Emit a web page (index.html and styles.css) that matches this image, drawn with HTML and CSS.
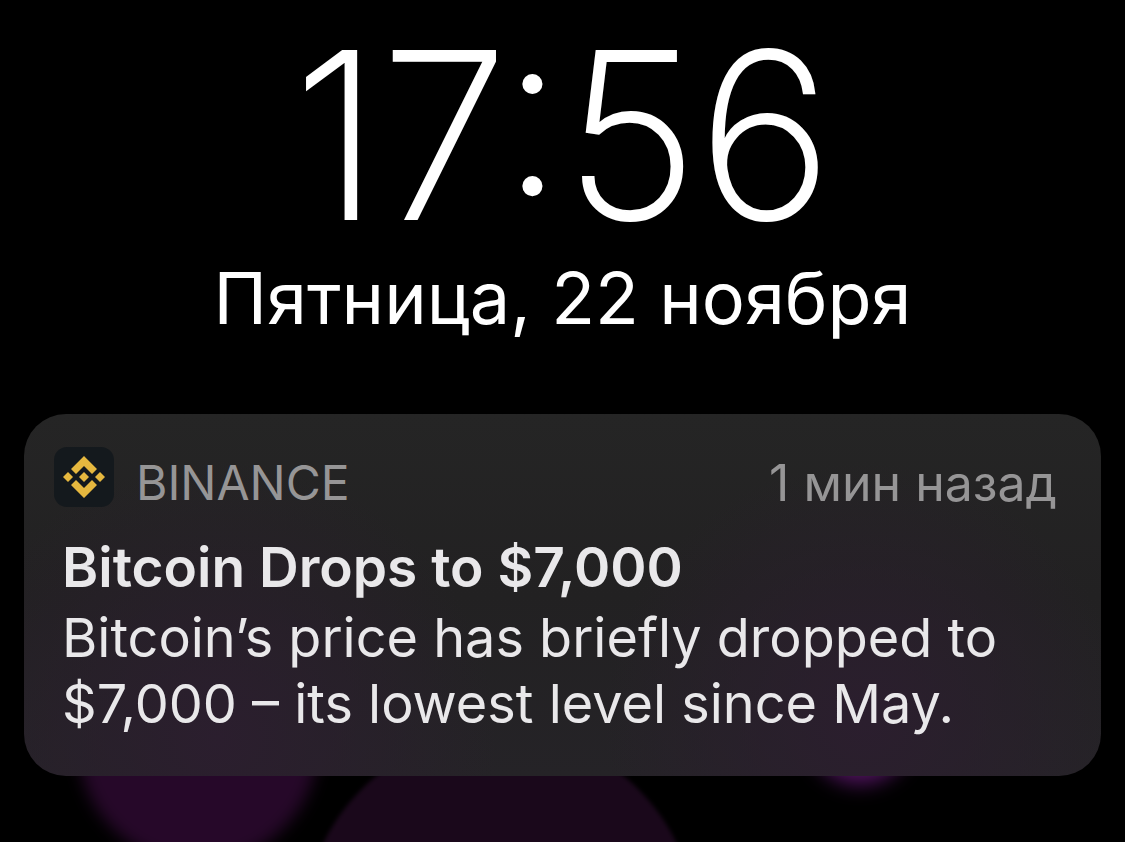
FILE: index.html
```html
<!DOCTYPE html>
<html lang="ru">
<head>
<meta charset="utf-8">
<meta name="viewport" content="width=device-width, initial-scale=1">
<title>Экран блокировки</title>
<link rel="stylesheet" href="styles.css">
</head>
<body>
<main class="screen">
  <div class="wallpaper" aria-hidden="true">
    <span class="orb orb-left"></span>
    <span class="orb orb-center"></span>
    <span class="orb orb-right"></span>
  </div>
  <header class="clock">
    <time class="time">17:56</time>
    <p class="date">Пятница, 22 ноября</p>
  </header>
  <article class="notification">
    <div class="source">
      <svg class="app-icon" viewBox="0 0 60 60" aria-hidden="true">
        <rect width="60" height="60" rx="13" fill="#14191d"/>
        <g fill="#e6b83f">
          <path d="M30 9 43 22 38 27 30 19 22 27 17 22Z"/>
          <path d="M30 51 43 38 38 33 30 41 22 33 17 38Z"/>
          <path d="M30 25 35 30 30 35 25 30Z"/>
          <path d="M14 25 19 30 14 35 9 30Z"/>
          <path d="M46 25 51 30 46 35 41 30Z"/>
        </g>
      </svg>
      <span class="app-name">BINANCE</span>
      <span class="age">1 мин назад</span>
    </div>
    <h1 class="title">Bitcoin Drops to $7,000</h1>
    <p class="message">Bitcoin’s price has briefly dropped to $7,000 – its lowest level since May.</p>
  </article>
</main>
</body>
</html>
```

FILE: styles.css
```css
* { box-sizing: border-box; }
body {
  margin: 0;
  background: #000;
  color: #fff;
  font-family: Inter, "Noto Sans", sans-serif;
}
.screen {
  position: relative;
  min-height: 100vh;
  padding: 24px;
}
.wallpaper { position: absolute; inset: 0; overflow: hidden; }
.orb { position: absolute; border-radius: 50%; }
.orb-left { left: 78px; top: 624px; width: 240px; height: 240px; background: #260829; filter: blur(8px); }
.orb-center { left: 304px; top: 732px; width: 392px; height: 392px; background: #1a081b; filter: blur(2px); }
.orb-right { left: 808px; top: 680px; width: 104px; height: 104px; background: #521460; filter: blur(10px); }
.clock { position: relative; text-align: center; }
.time { display: block; font-size: 231px; line-height: 222px; font-weight: 200; -webkit-text-stroke: 2px #fff; }
.date { margin: 0; font-size: 72px; line-height: 104px; font-weight: 400; }
.notification {
  position: relative;
  margin-top: 64px;
  padding: 33px 44px 39px 38px;
  border-radius: 42px;
  background:
    radial-gradient(circle at 18% 90%, #2b1e2e, transparent 280px),
    radial-gradient(circle at 78% 85%, #2b1e2e, transparent 260px),
    linear-gradient(#252525, #222122 50%, #252327);
  color: #e9e8ea;
}
.source { display: flex; align-items: flex-start; margin-left: -8px; color: #969596; font-size: 48px; line-height: 72px; }
.app-icon { width: 60px; height: 60px; margin-right: 22px; }
.age { margin-left: auto; font-size: 50px; }
.title { margin: 14px 0 4px; font-size: 55px; line-height: 68px; font-weight: 600; }
.message { margin: 0; font-size: 54px; line-height: 66px; font-weight: 400; }
```
